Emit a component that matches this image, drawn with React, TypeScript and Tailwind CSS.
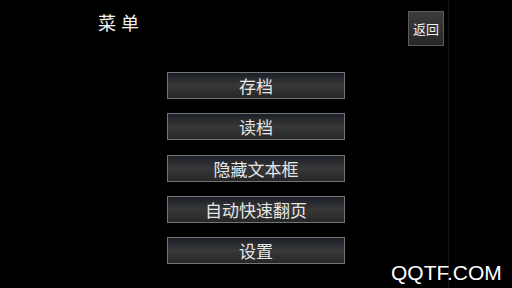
const items = ["存档", "读档", "隐藏文本框", "自动快速翻页", "设置"];

const cjk = { fontFamily: '"Noto Sans CJK SC", "Liberation Sans", sans-serif' };

export default function App() {
  return (
    <main className="relative flex h-[288px] w-[512px] overflow-hidden bg-black" style={cjk}>
      <div className="flex w-[449px] flex-col border-r border-[#151515]">
        <div className="flex h-[72px] items-start pt-[11px]">
          <h1 className="ml-[98px] mt-[1px] text-[18px] font-normal leading-[20px] tracking-[5px] text-[#f2f2f2]">菜单</h1>
          <button
            type="button"
            className="ml-auto mr-[4px] flex h-[35px] w-[36px] items-center justify-center border border-[#5a5a5a] bg-gradient-to-b from-[#3c3c3c] to-[#262626] text-[13px] leading-none text-[#f0f0f0]"
          >
            返回
          </button>
        </div>
        <div className="ml-[167px] flex w-[178px] flex-col gap-[14.25px]">
          {items.map((label) => (
            <button
              key={label}
              type="button"
              className="flex h-[27px] items-center justify-center border border-[#747474] bg-gradient-to-b from-[#1b1f27] via-[#383838] to-[#272727] text-[17px] leading-none text-[#e6e6e6]"
            >
              {label}
            </button>
          ))}
        </div>
      </div>
      <span
        className="absolute left-[391px] top-[261px] text-[21px] leading-[24px] text-white"
        style={{ fontFamily: '"Liberation Sans", Arial, sans-serif' }}
      >
        QQTF.COM
      </span>
    </main>
  );
}
